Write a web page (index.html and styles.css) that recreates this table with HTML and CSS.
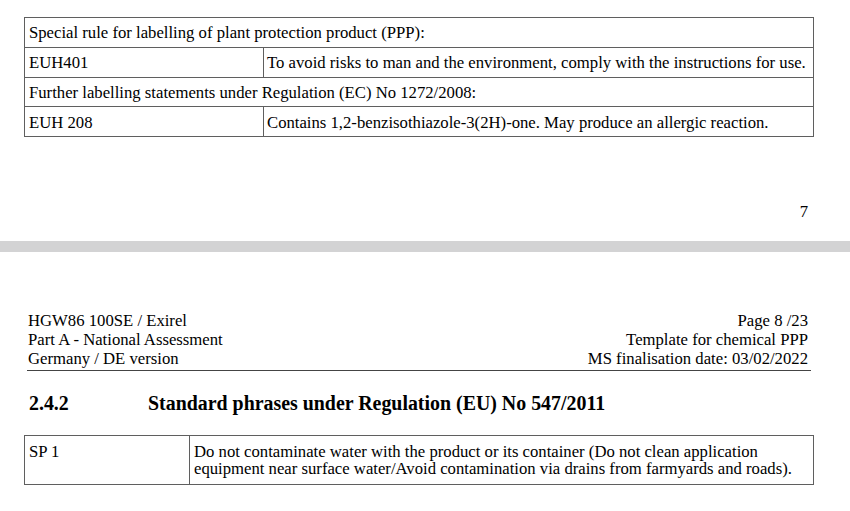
FILE: index.html
```html
<!DOCTYPE html>
<html>
<head>
<meta charset="utf-8">
<link rel="stylesheet" href="styles.css">
</head>
<body>
<section class="page page-end">
  <table class="grid grid-top">
    <colgroup><col class="col-code"><col></colgroup>
    <tr><td colspan="2" class="full">Special rule for labelling of plant protection product (PPP):</td></tr>
    <tr><td class="code">EUH401</td><td class="text">To avoid risks to man and the environment, comply with the instructions for use.</td></tr>
    <tr><td colspan="2" class="full">Further labelling statements under Regulation (EC) No 1272/2008:</td></tr>
    <tr><td class="code">EUH 208</td><td class="text">Contains 1,2-benzisothiazole-3(2H)-one. May produce an allergic reaction.</td></tr>
  </table>
  <div class="page-num">7</div>
</section>
<div class="page-gap"></div>
<section class="page page-start">
  <header class="doc-header">
    <div class="hdr-left">
      <div>HGW86 100SE / Exirel</div>
      <div>Part A - National Assessment</div>
      <div>Germany / DE version</div>
    </div>
    <div class="hdr-right">
      <div>Page 8 /23</div>
      <div>Template for chemical PPP</div>
      <div>MS finalisation date: 03/02/2022</div>
    </div>
  </header>
  <h2 class="section-title"><span class="sec-num">2.4.2</span><span>Standard phrases under Regulation (EU) No 547/2011</span></h2>
  <table class="grid grid-bottom">
    <colgroup><col class="col-sp"><col></colgroup>
    <tr><td class="sp-code">SP 1</td><td class="sp-text">Do not contaminate water with the product or its container (Do not clean application equipment near surface water/Avoid contamination via drains from farmyards and roads).</td></tr>
  </table>
</section>
</body>
</html>
```

FILE: styles.css
```css
html, body {
  margin: 0;
  padding: 0;
  background: #ffffff;
}
body {
  font-family: "Liberation Serif", "Times New Roman", serif;
  font-size: 16.7px;
  color: #000;
  width: 850px;
  overflow: hidden;
}
.page-end {
  padding: 17px 36px 0 24px;
  height: 241px;
  box-sizing: border-box;
}
.grid {
  border-collapse: collapse;
  width: 790px;
  table-layout: fixed;
}
.grid td {
  border: 1px solid #5f5f5f;
  vertical-align: top;
  line-height: 17px;
  white-space: nowrap;
}
.grid-top .col-code {
  width: 239px;
}
.grid-top td {
  height: 29.8px;
  padding: 1px 4px 0 4px;
  box-sizing: border-box;
  vertical-align: middle;
}
.grid-top td.text {
  padding-left: 3px;
}
.page-num {
  text-align: right;
  padding-right: 6px;
  margin-top: 65px;
  line-height: 19px;
}
.page-gap {
  height: 11px;
  background: #d3d3d4;
}
.page-start {
  padding: 59px 39px 0 27px;
}
.doc-header {
  display: flex;
  justify-content: space-between;
  line-height: 19px;
  border-bottom: 1px solid #444;
  padding: 0 3px 2px 1px;
}
.hdr-right {
  text-align: right;
}
.section-title {
  margin: 21px 0 0 2px;
  font-size: 19.9px;
  font-weight: bold;
  line-height: 22px;
  display: flex;
}
.sec-num {
  width: 119px;
  flex: none;
}
.grid-bottom {
  margin: 21px 0 0 -3px;
}
.grid-bottom .col-sp {
  width: 165px;
}
.grid-bottom td {
  padding: 7px 4px 7px 4px;
  line-height: 17px;
  white-space: normal;
}
```
